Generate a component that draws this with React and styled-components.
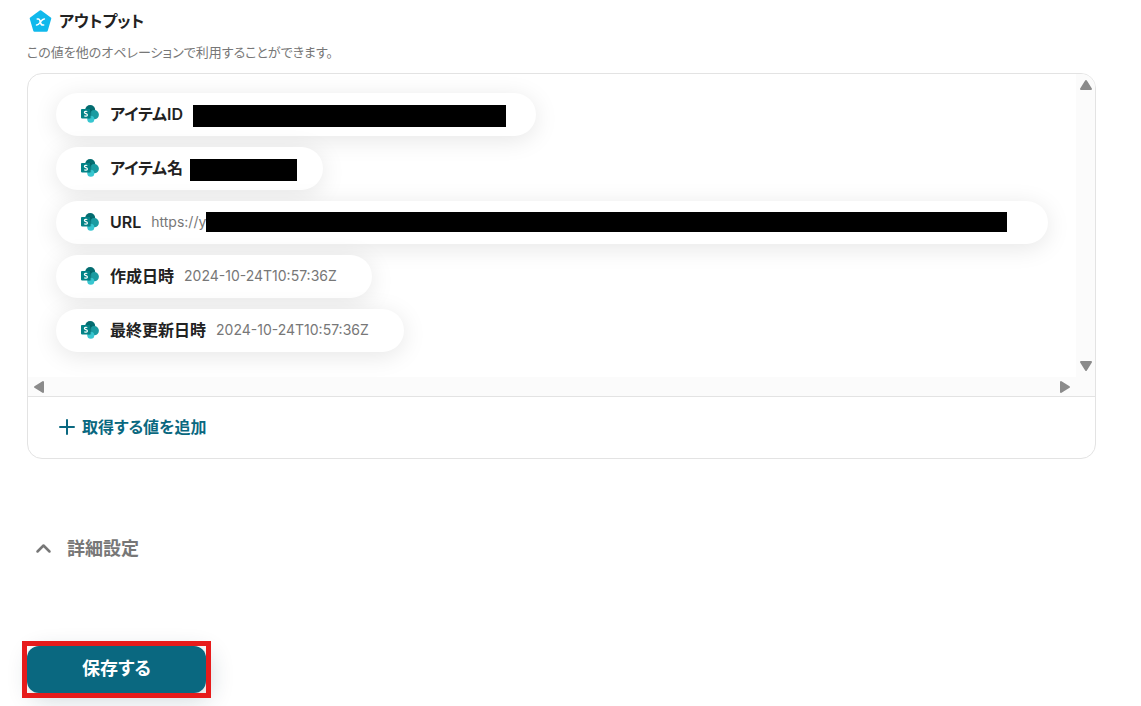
import styled, { createGlobalStyle } from 'styled-components'

const items = [
    { label: 'アイテムID', gap: 10, end: 30, mask: { width: 313, height: 22, top: 4 } },
    { label: 'アイテム名', gap: 7, end: 26, mask: { width: 107, height: 22, top: 4 } },
    { label: 'URL', value: 'https://y', gap: 10, end: 41, mask: { width: 801, height: 20, top: 0 } },
    { label: '作成日時', value: '2024-10-24T10:57:36Z', gap: 10, end: 35 },
    { label: '最終更新日時', value: '2024-10-24T10:57:36Z', gap: 10, end: 35 },
]

const SharePointIcon = () => (
    <svg width="18" height="18" viewBox="0 0 18 18" aria-hidden="true">
        <circle cx="9.2" cy="5" r="5" fill="#036c70" />
        <circle cx="13.3" cy="9.7" r="4.6" fill="#1a9ba1" />
        <circle cx="9.8" cy="14.3" r="3.5" fill="#37c6d0" />
        <path d="M6 4h4.2v9.6H6z" fill="#000" opacity="0.2" />
        <rect x="0" y="4" width="9.4" height="9.4" rx="0.8" fill="#038387" />
        <path d="M6.3 6.6C5.6 6.1 3.4 6 3.4 7.4c0 1.5 3 .9 3 2.5 0 1.5-2.3 1.5-3.2.9" fill="none" stroke="#fff" strokeWidth="1.2" />
    </svg>
)

const OutputIcon = () => (
    <svg width="24" height="24" viewBox="0 0 24 24" aria-hidden="true">
        <path d="M12.5 2.5 22 9.5 18.5 21.5H6.5L3 9.5Z" fill="#10b9ec" stroke="#10b9ec" strokeWidth="2.6" strokeLinejoin="round" />
        <path d="M9.2 9.9H10.4C11.5 9.9 11.9 11 12.3 13S13.6 16.1 14.7 16.1H15.7M16.4 9.9C14.6 9.7 13.5 11.4 12.4 13S10.3 16.3 8.5 16.1" fill="none" stroke="#fff" strokeWidth="1.5" strokeLinecap="round" />
    </svg>
)

const arrows = {
    up: 'M7 3 12 11H2Z',
    down: 'M2 3H12L7 11Z',
    left: 'M3 7 11 2V12Z',
    right: 'M11 7 3 2V12Z',
}

const Arrow = ({ direc, label }) => (
    <ArrowBtn type="button" aria-label={label}>
        <svg width="14" height="14" viewBox="0 0 14 14" aria-hidden="true">
            <path d={arrows[direc]} fill="#8b8b8b" stroke="#8b8b8b" strokeWidth="2" strokeLinejoin="round" />
        </svg>
    </ArrowBtn>
)

const Item = ({ label, value, gap, end, mask }) => (
    <Chip $end={end}>
        <SharePointIcon />
        <Label $gap={gap}>{label}</Label>
        <Value>
            {value}
            {mask && <Mask $width={mask.width} $height={mask.height} $top={mask.top} />}
        </Value>
    </Chip>
)

const App = () => {
    return (
        <>
            <GlobalStyle />
            <Page>
                <Header>
                    <OutputIcon />
                    <Title>アウトプット</Title>
                </Header>
                <Desc>この値を他のオペレーションで利用することができます。</Desc>
                <Panel>
                    <ScrollArea>
                        <List>
                            {items.map((item) => (
                                <Item key={item.label} {...item} />
                            ))}
                        </List>
                        <Track $vertical>
                            <Arrow direc="up" label="上へ" />
                            <Arrow direc="down" label="下へ" />
                        </Track>
                        <Track>
                            <Arrow direc="left" label="左へ" />
                            <Arrow direc="right" label="右へ" />
                        </Track>
                        <Corner />
                    </ScrollArea>
                    <Footer>
                        <AddBtn type="button">
                            <svg width="16" height="16" viewBox="0 0 16 16" aria-hidden="true">
                                <path d="M8 1v14M1 8h14" stroke="currentColor" strokeWidth="2" strokeLinecap="round" />
                            </svg>
                            取得する値を追加
                        </AddBtn>
                    </Footer>
                </Panel>
                <DetailBtn type="button" aria-expanded="false">
                    <svg width="18" height="18" viewBox="0 0 18 18" aria-hidden="true">
                        <path d="M2.5 11.5 8.5 5.5 14.5 11.5" fill="none" stroke="currentColor" strokeWidth="2.5" strokeLinecap="round" strokeLinejoin="round" />
                    </svg>
                    詳細設定
                </DetailBtn>
                <Highlight>
                    <SaveBtn type="button">保存する</SaveBtn>
                </Highlight>
            </Page>
        </>
    )
}
export default App

const GlobalStyle = createGlobalStyle`
* {
    box-sizing: border-box;
}

body {
    margin: 0;
    background-color: #fff;
    color: #222;
    font-family: Inter, "Noto Sans CJK JP", sans-serif;
    font-feature-settings: "palt";
}

button {
    font: inherit;
    font-feature-settings: inherit;
    border: none;
    background: none;
    padding: 0;
    cursor: pointer;
}

svg {
    display: block;
    flex: none;
}
`
const Page = styled.main`
padding: 9px 45px 8px 27px;
`
const Header = styled.div`
display: flex;
align-items: center;
gap: 7px;
padding-left: 1px;
`
const Title = styled.h1`
margin: 0;
font-size: 16px;
font-weight: 600;
line-height: 24px;
`
const Desc = styled.p`
margin: 9px 0 11px;
font-size: 13px;
line-height: 20px;
color: #777;
`
const Panel = styled.section`
border: 1px solid #e3e3e3;
border-radius: 15px;
overflow: hidden;
`
const ScrollArea = styled.div`
display: grid;
grid-template-columns: minmax(0, 1fr) 19px;
grid-template-rows: auto 19px;
`
const List = styled.div`
display: flex;
flex-direction: column;
align-items: flex-start;
gap: 11px;
padding: 19px 28px 25px;
overflow: hidden;
`
const Chip = styled.div`
display: flex;
align-items: center;
height: 43px;
padding: 0 ${({ $end }) => $end}px 1px 25px;
border-radius: 22px;
background-color: #fff;
box-shadow: 0 4px 24px rgba(0, 0, 0, 0.1);
white-space: nowrap;
`
const Label = styled.span`
margin: 0 ${({ $gap }) => $gap}px 0 11px;
font-size: 16px;
font-weight: 600;
line-height: 24px;
`
const Value = styled.span`
display: flex;
align-items: center;
font-size: 14px;
line-height: 24px;
color: #777;
`
const Mask = styled.span`
width: ${({ $width }) => $width}px;
height: ${({ $height }) => $height}px;
margin-top: ${({ $top }) => $top}px;
background-color: #000;
`
const Track = styled.div`
display: flex;
flex-direction: ${({ $vertical }) => ($vertical ? 'column' : 'row')};
justify-content: space-between;
align-items: center;
padding: ${({ $vertical }) => ($vertical ? '4px 0' : '0 4px')};
background-color: #fbfbfb;
`
const Corner = styled.div`
background-color: #fbfbfb;
`
const ArrowBtn = styled.button`
width: 14px;
height: 14px;
`
const Footer = styled.div`
border-top: 1px solid #e3e3e3;
padding: 18px 31px 19px;
`
const AddBtn = styled.button`
display: flex;
align-items: center;
gap: 7px;
font-size: 16px;
font-weight: 600;
line-height: 24px;
color: #0a6880;
`
const DetailBtn = styled.button`
display: flex;
align-items: center;
gap: 14px;
margin: 76px 0 78px 8px;
font-size: 18px;
font-weight: 600;
line-height: 28px;
color: #777;
`
const Highlight = styled.div`
position: relative;
width: fit-content;
margin-left: -5px;
padding: 5px;

&::after {
    content: "";
    position: absolute;
    inset: 0;
    border: 5px solid #e71b1b;
    pointer-events: none;
}
`
const SaveBtn = styled.button`
display: block;
width: 179px;
height: 47px;
padding-bottom: 6px;
border-radius: 12px;
background-color: #0a6880;
box-shadow: 4px 6px 24px rgba(10, 50, 70, 0.2);
color: #fff;
font-size: 18px;
font-weight: 700;
`
